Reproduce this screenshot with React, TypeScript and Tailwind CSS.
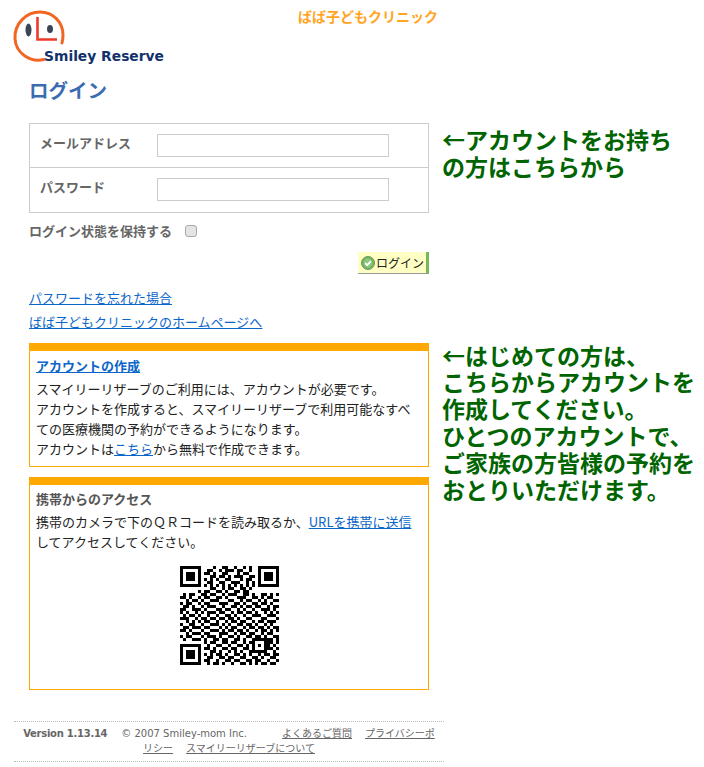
import React from 'react';

const FONT = '"Noto Sans CJK JP", "Liberation Sans", sans-serif';

// data modules of the QR picture, finder/timing/alignment get stamped over them
const QR_TOP = [
    '00010011001001010',
    '01100101110110010',
    '11010011000101100',
    '00110110101110011',
    '10101001100010110',
    '01100110011100101',
    '10101010101010101',
    '00110010110011010',
    '11001101001101100',
];
const QR_MID = [
    '010110011011001011100110100110101',
    '110100101100110100011100110101100',
    '001011010011100011001011001010011',
    '101100101100011100110100110110100',
    '011010010111001001101011011001011',
    '110011101000110110010100100111010',
    '101001010111011001011011010010101',
    '010110100100100110100100111001110',
    '111001011011011011010011000110001',
    '001010101100100101101100101101110',
    '100110010011101010011011010010100',
    '011011101100010101100101101101011',
    '110100010011101011011010010110101',
    '001011101100011100101101100101100',
    '101100010111010011010011011010011',
    '010011101001101100110100100111101',
];
const QR_BOTTOM = [
    '1011001101100101101001101',
    '0100110010011010011011010',
    '1101001101100110100101101',
    '0011010010101001101110010',
    '1010110100110101001011011',
    '0110011011001100110100110',
    '1100100110110011011001001',
    '0101101001001101010110110',
];

const buildQr = (): boolean[][] => {
    const size = 33;
    const m: boolean[][] = [];
    for (let r = 0; r < size; r++) {
        const row: boolean[] = [];
        for (let c = 0; c < size; c++) {
            let ch = '0';
            if (r < 9) ch = c >= 8 && c < 25 ? QR_TOP[r][c - 8] : '0';
            else if (r < 25) ch = QR_MID[r - 9][c];
            else ch = c >= 8 ? QR_BOTTOM[r - 25][c - 8] : '0';
            row.push(ch === '1');
        }
        m.push(row);
    }
    const finder = (top: number, left: number) => {
        for (let r = 0; r < 7; r++) {
            for (let c = 0; c < 7; c++) {
                const edge = r === 0 || r === 6 || c === 0 || c === 6;
                const core = r >= 2 && r <= 4 && c >= 2 && c <= 4;
                m[top + r][left + c] = edge || core;
            }
        }
    };
    finder(0, 0);
    finder(0, 26);
    finder(26, 0);
    for (let i = 8; i < 25; i++) {
        m[6][i] = i % 2 === 0;
        m[i][6] = i % 2 === 0;
    }
    for (let r = 0; r < 5; r++) {
        for (let c = 0; c < 5; c++) {
            m[24 + r][24 + c] = r === 0 || r === 4 || c === 0 || c === 4 || (r === 2 && c === 2);
        }
    }
    return m;
};

const QrCode: React.FC = () => {
    const modules = buildQr();
    return (
        <svg width="99" height="99" viewBox="0 0 33 33" shapeRendering="crispEdges" className="block">
            {modules.map((row, r) =>
                row.map((on, c) => (on ? <rect key={`${r}-${c}`} x={c} y={r} width="1" height="1" fill="#000" /> : null))
            )}
        </svg>
    );
};

const Logo: React.FC = () => (
    <svg width="165" height="70" viewBox="0 0 165 70" className="block shrink-0">
        <path d="M44 59.5C30 63 16 53 15 39C14 24 26 12 40 12C53 12 63 22 63 35C63 38 62.5 41 62 43" fill="none" stroke="#f26522" strokeWidth="3" strokeLinecap="round" />
        <ellipse cx="28.5" cy="30" rx="3" ry="6.5" fill="#3b4654" />
        <ellipse cx="50" cy="29" rx="3" ry="4" fill="#3b4654" />
        <path d="M37.5 17V39.5H57" fill="none" stroke="#ee3a2a" strokeWidth="2.6" />
        <text x="44" y="61" fontFamily='"DejaVu Sans", sans-serif' fontWeight="700" fontSize="14" fill="#12306b" textLength="120" lengthAdjust="spacingAndGlyphs">Smiley Reserve</text>
    </svg>
);

const CheckIcon: React.FC = () => (
    <svg width="14" height="14" viewBox="0 0 14 14" className="shrink-0">
        <circle cx="7" cy="7" r="6.5" fill="#79b266" stroke="#6b9a5c" />
        <circle cx="7" cy="7" r="4.4" fill="#8cc97a" />
        <path d="M4.2 7.2L6.2 9.2L9.9 5.2" fill="none" stroke="#fff" strokeWidth="1.7" />
    </svg>
);

const FormRow: React.FC<{ label: string; last?: boolean }> = ({ label, last }) => (
    <div className={`flex h-11 pl-[10px] ${last ? '' : 'border-b border-[#ccc]'}`}>
        <div className="w-[117px] pt-[8px] text-[13px] leading-[22px] font-bold text-[#666]">{label}</div>
        <input type="text" className="mt-[10px] h-[23px] w-[232px] border border-[#ccc] bg-white" />
    </div>
);

const App: React.FC = () => {
    return (
        <div className="w-[704px] h-[767px] overflow-hidden bg-white text-[13px] leading-5 text-[#222]" style={{ fontFamily: FONT }}>
            {/* Header */}
            <div className="flex h-[70px] items-start">
                <Logo />
                <div className="ml-[133px] pt-[6px] text-sm leading-5 font-bold text-[#ffa523]">ばば子どもクリニック</div>
            </div>

            <div className="flex">
                {/* Left column */}
                <div className="ml-[29px] w-[400px]">
                    <h1 className="mt-[6px] text-[19.5px] leading-[28px] font-bold text-[#3c6cb0]">ログイン</h1>

                    <div className="mt-[19px] border border-[#ccc]">
                        <FormRow label="メールアドレス" />
                        <FormRow label="パスワード" last />
                    </div>

                    <div className="mt-[8px] flex h-5 items-center font-bold text-[#666]">
                        <span>ログイン状態を保持する</span>
                        <input type="checkbox" className="ml-[13px] h-3 w-3 appearance-none rounded-[3px] border border-[#aaa] bg-[#e4e4e4]" />
                    </div>

                    <div className="mt-[11px] flex justify-end">
                        <button className="flex h-[22px] items-center gap-[1px] border-r-[3px] border-b border-r-[#78b75a] border-b-[#999] bg-[#ffffc4] pr-[2px] pl-[3px] text-[12px] text-[#222]">
                            <CheckIcon />
                            ログイン
                        </button>
                    </div>

                    <div className="mt-[14px] flex flex-col gap-1">
                        <a href="#" className="text-[#0b66c9] underline">パスワードを忘れた場合</a>
                        <a href="#" className="text-[#0b66c9] underline">ばば子どもクリニックのホームページへ</a>
                    </div>

                    <div className="mt-[11px] border border-t-[8px] border-[#ffa800] px-[6px] pt-[5px] pb-[7px]">
                        <a href="#" className="font-bold text-[#0b66c9] underline">アカウントの作成</a>
                        <p className="mt-[3px]">
                            スマイリーリザーブのご利用には、アカウントが必要です。<br />
                            アカウントを作成すると、スマイリーリザーブで利用可能なすべての医療機関の予約ができるようになります。<br />
                            アカウントは<a href="#" className="text-[#0b66c9] underline">こちら</a>から無料で作成できます。
                        </p>
                    </div>

                    <div className="mt-[10px] h-[213px] border border-t-[8px] border-[#ffa800] px-[6px] pt-[4px]">
                        <div className="font-bold text-[#555]">携帯からのアクセス</div>
                        <p className="mt-[3px]">
                            携帯のカメラで下のＱＲコードを読み取るか、<a href="#" className="text-[#0b66c9] underline">URLを携帯に送信</a>してアクセスしてください。
                        </p>
                        <div className="mt-[14px] flex justify-center">
                            <QrCode />
                        </div>
                    </div>
                </div>

                {/* Notes on the right */}
                <div className="ml-[13px] flex-1 text-[23px] leading-[26.8px] font-bold text-[#006400]">
                    <p className="mt-[56px]">←アカウントをお持ち<br />の方はこちらから</p>
                    <p className="mt-[162px]">
                        ←はじめての方は、<br />
                        こちらからアカウントを<br />
                        作成してください。<br />
                        ひとつのアカウントで、<br />
                        ご家族の方皆様の予約を<br />
                        おとりいただけます。
                    </p>
                </div>
            </div>

            {/* Footer */}
            <div className="mt-[31px] ml-[14px] w-[430px] border-y border-dotted border-[#bbb] px-[6px] pt-[4px] pb-[5px] text-center text-[10px] leading-[15px] text-[#666]" style={{ fontFamily: '"DejaVu Sans", "Noto Sans CJK JP", sans-serif' }}>
                <span className="font-bold tracking-[-0.27px]">Version 1.13.14</span>
                <span className="ml-[14px]">© 2007 Smiley-mom Inc.</span>
                <a href="#" className="ml-[35px] underline">よくあるご質問</a>
                <a href="#" className="ml-[13px] underline">プライバシーポリシー</a>
                <a href="#" className="ml-[13px] underline">スマイリーリザーブについて</a>
            </div>
        </div>
    );
};

export default App;
